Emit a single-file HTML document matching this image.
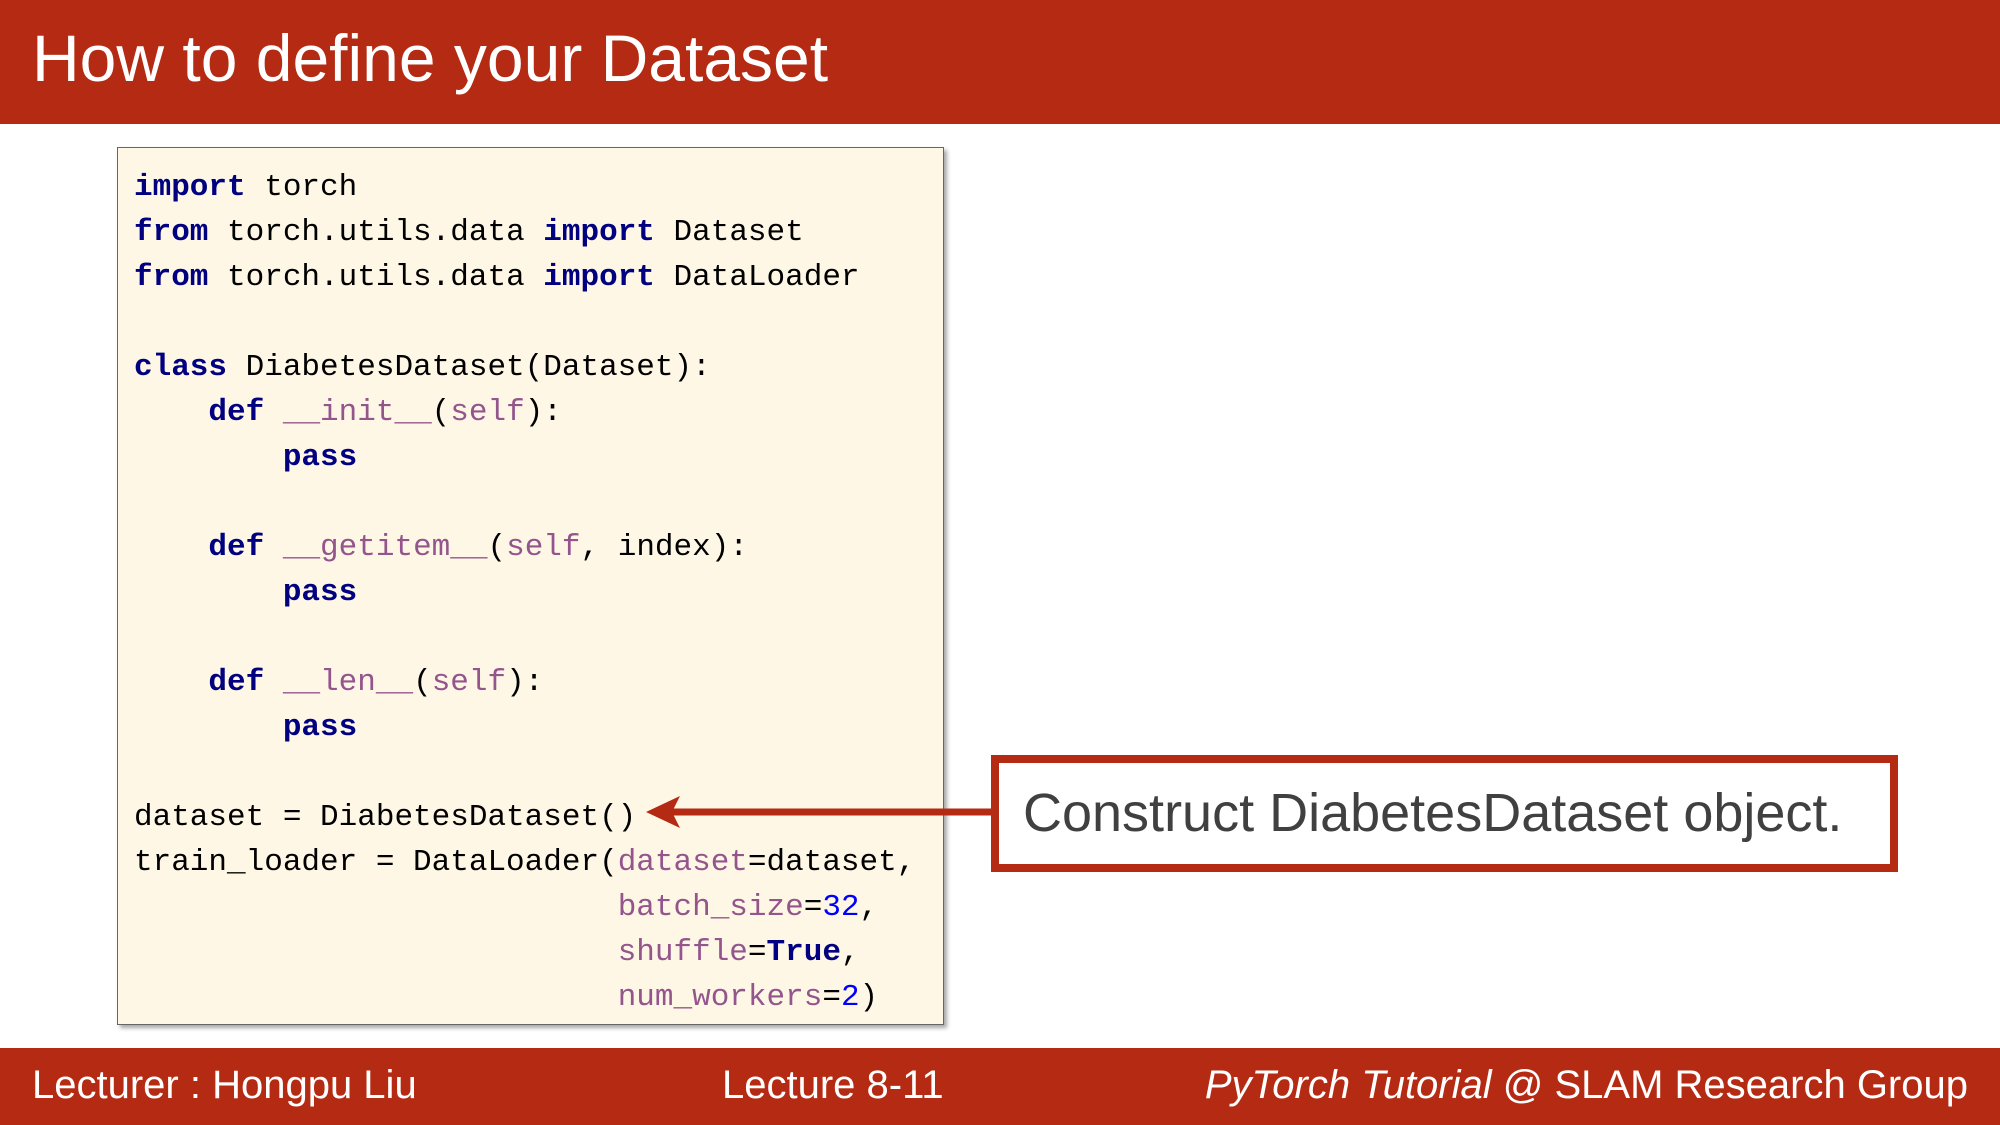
<!DOCTYPE html>
<html><head><meta charset="utf-8"><style>
body{margin:0;width:2000px;height:1125px;position:relative;background:#fff;overflow:hidden;font-family:"Liberation Sans",sans-serif}
.hdr{position:absolute;left:0;top:0;width:2000px;height:124px;background:#B52A12}
.title{position:absolute;left:32px;top:20px;font-size:66px;color:#fff;white-space:nowrap}
.ftr{position:absolute;left:0;top:1048px;width:2000px;height:77px;background:#B52A12;color:#fff;font-size:40px}
.ftr span{position:absolute;top:15px;white-space:nowrap}
.code{position:absolute;left:117px;top:147px;width:825px;height:876px;background:#FEF7E6;border:1px solid #666;box-shadow:3px 3px 4px rgba(0,0,0,.35)}
pre{position:absolute;left:16px;top:17px;margin:0;font-family:"Liberation Mono",monospace;font-size:31px;line-height:45px;color:#000}
.k{color:#000080;font-weight:bold}.p{color:#94558D}.n{color:#0000FF}
.call{position:absolute;left:991px;top:755px;width:891px;height:101px;border:8px solid #B52A12;background:#fff}
.call span{position:absolute;left:24px;top:19px;font-size:54px;color:#404040;white-space:nowrap}
</style></head><body>
<div class="hdr"><div class="title">How to define your Dataset</div></div>
<div class="code"><pre><span class="k">import</span> torch
<span class="k">from</span> torch.utils.data <span class="k">import</span> Dataset
<span class="k">from</span> torch.utils.data <span class="k">import</span> DataLoader

<span class="k">class</span> DiabetesDataset(Dataset):
    <span class="k">def</span> <span class="p">__init__</span>(<span class="p">self</span>):
        <span class="k">pass</span>

    <span class="k">def</span> <span class="p">__getitem__</span>(<span class="p">self</span>, index):
        <span class="k">pass</span>

    <span class="k">def</span> <span class="p">__len__</span>(<span class="p">self</span>):
        <span class="k">pass</span>

dataset = DiabetesDataset()
train_loader = DataLoader(<span class="p">dataset</span>=dataset,
                          <span class="p">batch_size</span>=<span class="n">32</span>,
                          <span class="p">shuffle</span>=<span class="k">True</span>,
                          <span class="p">num_workers</span>=<span class="n">2</span>)</pre></div>
<svg style="position:absolute;left:0;top:0" width="2000" height="1125">
<line x1="995" y1="812" x2="670" y2="812" stroke="#B52A12" stroke-width="7"/>
<polygon points="646,812 680,796 672,812 680,828" fill="#B52A12"/>
</svg>
<div class="call"><span>Construct DiabetesDataset object.</span></div>
<div class="ftr"><span style="left:32px">Lecturer : Hongpu Liu</span><span style="left:722px">Lecture 8-11</span><span style="right:32px"><i>PyTorch Tutorial</i> @ SLAM Research Group</span></div>
</body></html>
